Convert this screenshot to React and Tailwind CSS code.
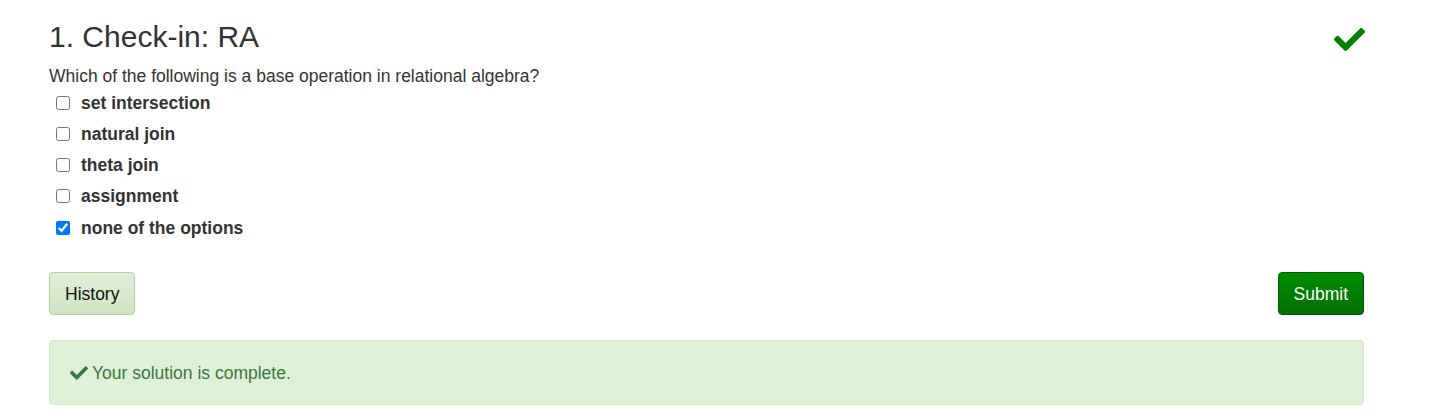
import { useState } from "react";

const options = [
  "set intersection",
  "natural join",
  "theta join",
  "assignment",
  "none of the options",
];

function Check({ className }) {
  return (
    <svg viewBox="0 0 512 512" className={className} fill="currentColor">
      <path d="M173.9 439.4 7.5 273c-10-10-10-26.2 0-36.2l36.2-36.2c10-10 26.2-10 36.2 0L192 312.7 432.1 72.6c10-10 26.2-10 36.2 0l36.2 36.2c10 10 10 26.2 0 36.2L210.1 439.4c-10 10-26.2 10-36.2 0z" />
    </svg>
  );
}

export default function App() {
  const [checked, setChecked] = useState([false, false, false, false, true]);

  const toggle = (i) => {
    const next = [...checked];
    next[i] = !next[i];
    setChecked(next);
  };

  return (
    <div className="min-h-screen bg-white text-[#333] font-['Liberation_Sans',Arial,sans-serif]">
      <div className="w-[1315px] ml-[49px]">
        {/* Title row */}
        <div className="flex items-start justify-between pt-[20px]">
          <h2 className="text-[30px] leading-[33px]">1. Check-in: RA</h2>
          <Check className="w-[31px] h-[31px] mt-[4px] -mr-[1px] text-[#008000]" />
        </div>

        <p className="mt-[9px] text-[17.5px] leading-[24px]">
          Which of the following is a base operation in relational algebra?
        </p>

        {/* Options */}
        <div className="flex flex-col -mt-[1px]">
          {options.map((opt, i) => (
            <label
              key={opt}
              className="flex items-center h-[31.25px] pl-[7px] gap-[11px] cursor-pointer"
            >
              <input
                type="checkbox"
                checked={checked[i]}
                onChange={() => toggle(i)}
                className="w-[14px] h-[14px] m-0 accent-[#0075ff]"
              />
              <span className="font-bold text-[17.5px]">{opt}</span>
            </label>
          ))}
        </div>

        {/* Buttons */}
        <div className="flex justify-between mt-[29px]">
          <button className="h-[43px] px-[15px] rounded-[4px] border border-[#b2d1a0] bg-gradient-to-b from-[#e2efda] to-[#cfe3c1] text-[17.5px] text-[#111]">
            History
          </button>
          <button className="h-[43px] px-[15px] rounded-[4px] border border-[#005a00] bg-gradient-to-b from-[#008d00] to-[#006f00] text-[17.5px] text-white">
            Submit
          </button>
        </div>

        {/* Status */}
        <div className="mt-[25px] h-[65px] flex items-center gap-[4px] px-[20px] rounded-[4px] border border-[#d6e9c6] bg-[#dff0d8] text-[#3c763d] text-[17.5px]">
          <Check className="w-[18px] h-[18px]" />
          <span>Your solution is complete.</span>
        </div>
      </div>
    </div>
  );
}
